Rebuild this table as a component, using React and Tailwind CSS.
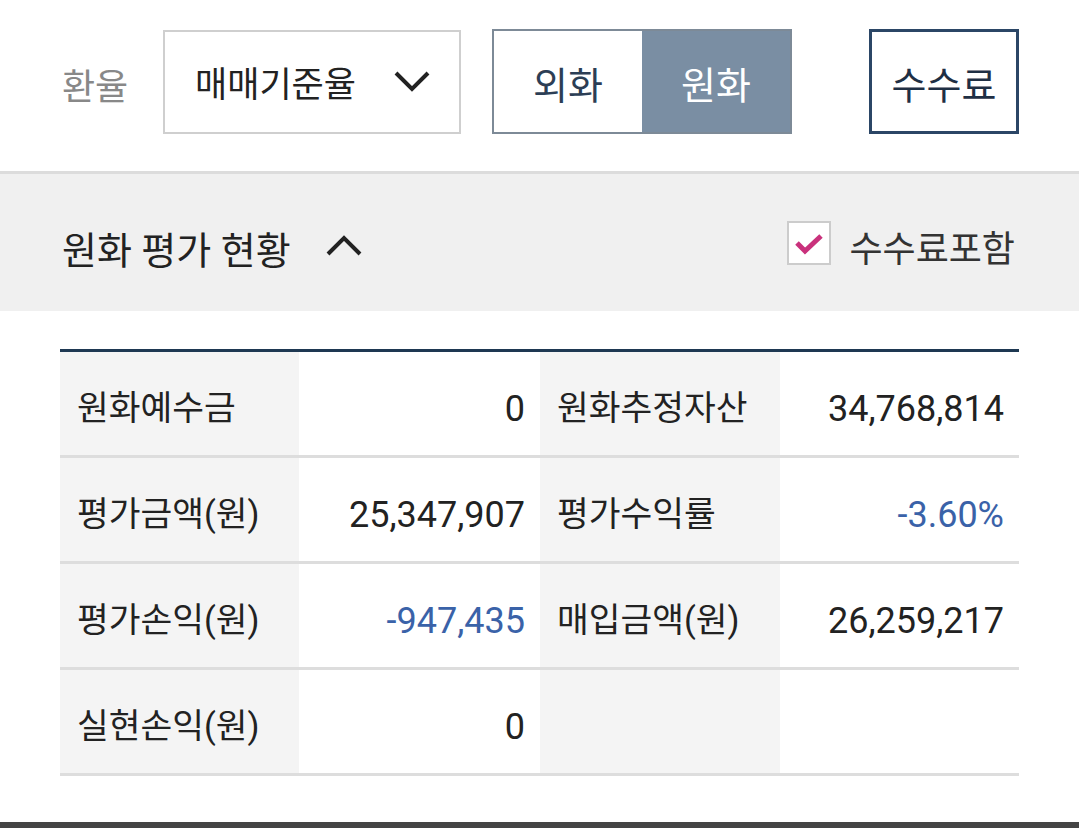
const rows = [
  [
    { label: "원화예수금", value: "0" },
    { label: "원화추정자산", value: "34,768,814" },
  ],
  [
    { label: "평가금액(원)", value: "25,347,907" },
    { label: "평가수익률", value: "-3.60%", blue: true },
  ],
  [
    { label: "평가손익(원)", value: "-947,435", blue: true },
    { label: "매입금액(원)", value: "26,259,217" },
  ],
  [
    { label: "실현손익(원)", value: "0" },
    { label: "", value: "" },
  ],
];

function Chevron({ up }) {
  return (
    <svg width="38" height="24" viewBox="0 0 38 24" fill="none">
      <path
        d={up ? "M3 21 L19 5 L35 21" : "M3 3 L19 19 L35 3"}
        stroke="#222"
        strokeWidth="4"
      />
    </svg>
  );
}

export default function App() {
  return (
    <div
      className="w-[1079px] h-[828px] bg-white flex flex-col text-[#222]"
      style={{ fontFamily: '"Roboto", "Noto Sans CJK KR", sans-serif' }}
    >
      {/* 상단 필터 */}
      <div className="h-[171px] flex items-center pb-[8px] pl-[62px] pr-[60px]">
        <span className="text-[36px] text-[#888] w-[101px] pt-[12px]">환율</span>
        <div className="w-[298px] h-[104px] border-2 border-[#cfcfcf] flex items-center justify-between pl-[30px] pr-[28px]">
          <span className="text-[35px] pt-[10px]">매매기준율</span>
          <Chevron />
        </div>
        <div className="ml-[31px] w-[300px] h-[105px] border-2 border-[#7d8a97] flex">
          <div className="flex-1 flex items-center justify-center pt-[10px] bg-white text-[38px] text-[#2c3e55]">외화</div>
          <div className="flex-1 flex items-center justify-center pt-[10px] bg-[#7a8ea3] text-[38px] text-white">원화</div>
        </div>
        <div className="ml-auto w-[150px] h-[105px] border-[3px] border-[#2b4666] flex items-center justify-center pt-[10px] text-[38px] text-[#1f2f44]">
          수수료
        </div>
      </div>

      {/* 섹션 헤더 */}
      <div className="h-[140px] bg-[#f0f0f0] border-t-[3px] border-[#dcdcdc] flex items-center pl-[62px] pr-[64px]">
        <span className="text-[38px] mt-[18px]">원화 평가 현황</span>
        <span className="ml-[34px] mt-[4px]"><Chevron up /></span>
        <label className="ml-auto flex items-center gap-[18px]">
          <span className="w-[44px] h-[44px] border-2 border-[#cccccc] bg-white flex items-center justify-center">
            <svg width="30" height="24" viewBox="0 0 30 24" fill="none">
              <path d="M3 12 L11 20 L27 5" stroke="#c9317c" strokeWidth="5" />
            </svg>
          </span>
          <span className="text-[36px] text-[#333] mt-[14px]">수수료포함</span>
        </label>
      </div>

      {/* 표 */}
      <div className="mt-[38px] mx-[60px] border-t-[3px] border-[#1e3852]">
        {rows.map((row, i) => (
          <div key={i} className="grid grid-cols-[239px_241px_240px_239px] h-[106px] border-b-[3px] border-[#dddddd]">
            {row.map((c, j) => (
              <>
                <div key={"l" + j} className="bg-[#f4f4f4] flex items-center pl-[17px] pt-[10px] text-[34.5px]">{c.label}</div>
                <div
                  key={"v" + j}
                  className={
                    "bg-white flex items-center justify-end pr-[15px] pt-[10px] text-[36px] " +
                    (c.blue ? "text-[#3a62a8]" : "text-[#222]")
                  }
                >
                  {c.value}
                </div>
              </>
            ))}
          </div>
        ))}
      </div>

      <div className="mt-auto h-[6px] bg-[#444]" />
    </div>
  );
}
